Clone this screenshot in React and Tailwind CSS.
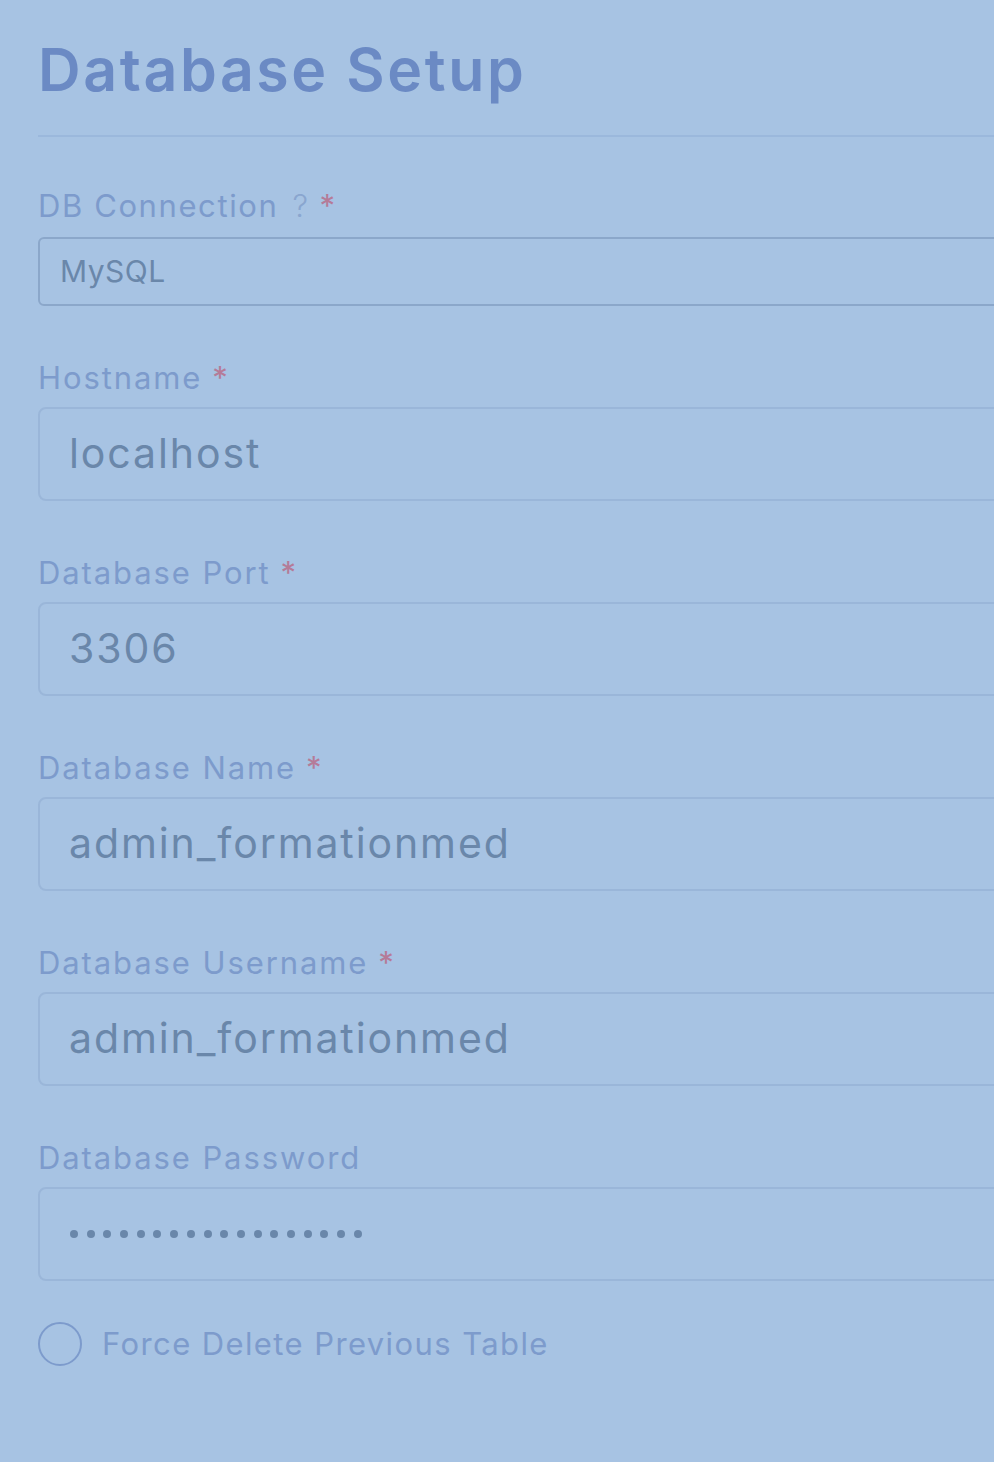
const font = { fontFamily: "Inter, 'Noto Sans', sans-serif" };

const Req = () => <span className="ml-[10px] text-[#b57b98]">*</span>;

const Field = ({ label, value, required, password }) => (
  <div className="mt-[55px]">
    <label className="flex h-[32px] items-center text-[31px] leading-none tracking-[1.9px] text-[#7d9bcc]">
      {label}
      {required && <Req />}
    </label>
    <div className="mt-[14px] flex h-[94px] w-[1000px] items-center rounded-[8px] border-2 border-[#9ab6d9] pl-[29px] text-[41px] tracking-[1.9px] text-[#6a87aa]">
      {password ? (
        <div className="flex gap-[8.7px] pl-[1px]">
          {Array.from({ length: 18 }).map((_, i) => (
            <span key={i} className="h-[8px] w-[8px] rounded-full bg-[#6a87aa]" />
          ))}
        </div>
      ) : (
        value
      )}
    </div>
  </div>
);

export default function App() {
  return (
    <div className="min-h-[1462px] w-full overflow-hidden bg-[#a7c3e3] pl-[38px] pt-[36px]" style={font}>
      <h1 className="text-[59px] font-semibold leading-[68px] tracking-[2.6px] text-[#6b8ac4]">Database Setup</h1>
      <div className="mt-[31px] h-[2px] w-[1000px] bg-[#9bb8dc]" />

      <div className="mt-[52px]">
        <label className="flex h-[32px] items-center text-[31px] leading-none tracking-[1.6px] text-[#7d9bcc]">
          DB Connection
          <span className="ml-[14px] font-light text-[#8aa6cf]">?</span>
          <Req />
        </label>
        <div className="mt-[16px] flex h-[69px] w-[1000px] items-center rounded-[6px] border-2 border-[#8ba7ca] pl-[20px] text-[30px] tracking-[0.5px] text-[#6a87aa]">
          MySQL
        </div>
      </div>

      <Field label="Hostname" value="localhost" required />
      <Field label="Database Port" value="3306" required />
      <Field label="Database Name" value="admin_formationmed" required />
      <Field label="Database Username" value="admin_formationmed" required />
      <Field label="Database Password" password />

      <div className="mt-[40px] flex items-center gap-[20px]">
        <span className="h-[44px] w-[44px] rounded-full border-2 border-[#7d9bcc]" />
        <span className="text-[31px] tracking-[1.4px] text-[#7d9bcc]">Force Delete Previous Table</span>
      </div>
    </div>
  );
}
